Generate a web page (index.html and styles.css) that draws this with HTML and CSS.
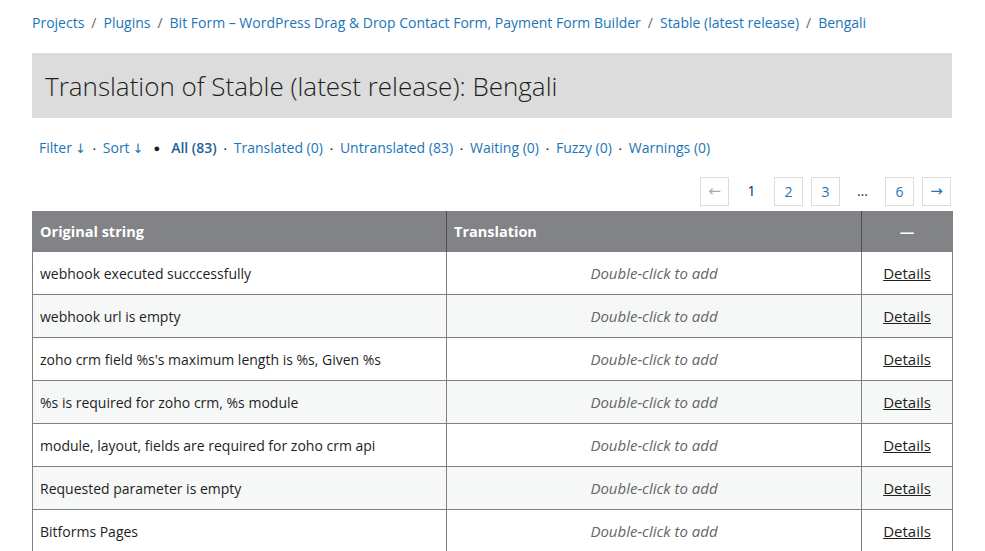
FILE: index.html
```html
<!DOCTYPE html>
<html lang="en">
<head>
<meta charset="utf-8">
<title>Translation of Stable (latest release): Bengali</title>
<link rel="stylesheet" href="styles.css">
</head>
<body>
<div class="page">
  <nav class="crumbs"><a href="#">Projects</a><span class="sep">/</span><a href="#">Plugins</a><span class="sep">/</span><a href="#">Bit Form – WordPress Drag &amp; Drop Contact Form, Payment Form Builder</a><span class="sep">/</span><a href="#">Stable (latest release)</a><span class="sep">/</span><a href="#">Bengali</a></nav>
  <div class="title-box">
    <h2 class="title">Translation of Stable (latest release): Bengali</h2>
  </div>
  <div class="filters"><a href="#">Filter<span class="arr">↓</span></a><span class="dot">•</span><a href="#">Sort<span class="arr">↓</span></a><span class="bigdot">●</span><a href="#" class="current">All (83)</a><span class="dot">•</span><a href="#">Translated (0)</a><span class="dot">•</span><a href="#">Untranslated (83)</a><span class="dot">•</span><a href="#">Waiting (0)</a><span class="dot">•</span><a href="#">Fuzzy (0)</a><span class="dot">•</span><a href="#">Warnings (0)</a></div>
  <div class="paging">
    <span class="pg box disabled">←</span>
    <span class="pg cur">1</span>
    <a class="pg box" href="#">2</a>
    <a class="pg box" href="#">3</a>
    <span class="pg dots">…</span>
    <a class="pg box" href="#">6</a>
    <a class="pg box" href="#">→</a>
  </div>
  <table class="tbl">
    <thead>
      <tr><th class="c1">Original string</th><th class="c2">Translation</th><th class="c3">—</th></tr>
    </thead>
    <tbody>
      <tr><td class="c1">webhook executed succcessfully</td><td class="c2">Double-click to add</td><td class="c3"><a href="#">Details</a></td></tr>
      <tr><td class="c1">webhook url is empty</td><td class="c2">Double-click to add</td><td class="c3"><a href="#">Details</a></td></tr>
      <tr><td class="c1">zoho crm field %s's maximum length is %s, Given %s</td><td class="c2">Double-click to add</td><td class="c3"><a href="#">Details</a></td></tr>
      <tr><td class="c1">%s is required for zoho crm, %s module</td><td class="c2">Double-click to add</td><td class="c3"><a href="#">Details</a></td></tr>
      <tr><td class="c1">module, layout, fields are required for zoho crm api</td><td class="c2">Double-click to add</td><td class="c3"><a href="#">Details</a></td></tr>
      <tr><td class="c1">Requested parameter is empty</td><td class="c2">Double-click to add</td><td class="c3"><a href="#">Details</a></td></tr>
      <tr><td class="c1">Bitforms Pages</td><td class="c2">Double-click to add</td><td class="c3"><a href="#">Details</a></td></tr>
    </tbody>
  </table>
</div>
</body>
</html>
```

FILE: styles.css
```css
html, body {
  margin: 0;
  padding: 0;
  background: #fff;
}
body {
  font-family: "Open Sans", "Noto Sans", sans-serif;
  font-size: 14px;
  color: #1e1e1e;
}
a {
  color: #1b75b7;
  text-decoration: none;
}
.page {
  width: 920px;
  padding: 12px 0 0 32px;
}
.crumbs {
  height: 22px;
  line-height: 22px;
  font-size: 14px;
}
.crumbs .sep {
  color: #666;
  margin: 0 7px;
}
.title-box {
  margin-top: 19px;
  height: 65px;
  background: #dcdcdc;
  display: flex;
  align-items: center;
  padding-left: 13px;
}
.title {
  margin: 0;
  font-size: 26px;
  font-weight: 300;
  color: #1e1e1e;
  line-height: 32px;
}
.filters {
  margin-top: 19px;
  padding-left: 7px;
  height: 22px;
  line-height: 22px;
  font-size: 14px;
}
.filters .arr {
  font-family: "DejaVu Sans", sans-serif;
  font-size: 13px;
  margin-left: 3px;
}
.filters .dot {
  font-size: 8px;
  color: #1e1e1e;
  margin: 0 7px;
  vertical-align: 1px;
}
.filters .bigdot {
  font-size: 11px;
  color: #1e1e1e;
  margin: 0 11px 0 10px;
  vertical-align: 1px;
}
.filters .current {
  font-weight: 600;
  color: #1e5f95;
}
.paging {
  margin-top: 18px;
  display: flex;
  justify-content: flex-end;
  gap: 8px;
  height: 29px;
  margin-bottom: 5px;
  padding-right: 1px;
}
.pg {
  box-sizing: border-box;
  min-width: 29px;
  height: 29px;
  line-height: 27px;
  text-align: center;
  font-size: 14px;
  padding: 0 7px;
}
.pg.box {
  border: 1px solid #dcdcdc;
}
.pg.box:first-child, .pg.box:last-child {
  font-family: "DejaVu Sans", sans-serif;
  font-size: 15px;
}
.pg.disabled {
  color: #aaa;
}
.pg.cur {
  color: #1a1a55;
  padding: 0 8px;
}
.pg.dots {
  color: #333;
  padding: 0 8px;
}
.tbl {
  width: 921px;
  border-collapse: collapse;
  table-layout: fixed;
}
.tbl th {
  background: #828387;
  color: #fff;
  font-weight: 700;
  font-size: 14.5px;
  height: 40px;
  text-align: left;
  padding: 0 7px;
  border-left: 1px solid #4d4d4d;
  border-right: 1px solid #4d4d4d;
}
.tbl th:first-child { border-left: 1px solid #828387; }
.tbl th:last-child { border-right: 1px solid #828387; }
.tbl th.c3 { text-align: center; }
.tbl .c1 { width: 399px; }
.tbl .c2 { width: 400px; }
.tbl td {
  height: 42px;
  border: 1px solid #808080;
  padding: 0 7px;
  font-size: 14px;
  color: #1e1e1e;
}
.tbl tbody tr:nth-child(even) td {
  background: #f6f7f7;
}
.tbl td.c2 {
  text-align: center;
  font-style: italic;
  font-size: 15px;
  color: #666;
}
.tbl td.c3 {
  text-align: center;
  font-size: 15px;
}
.tbl td.c3 a {
  color: #1e1e1e;
  text-decoration: underline;
}
```
